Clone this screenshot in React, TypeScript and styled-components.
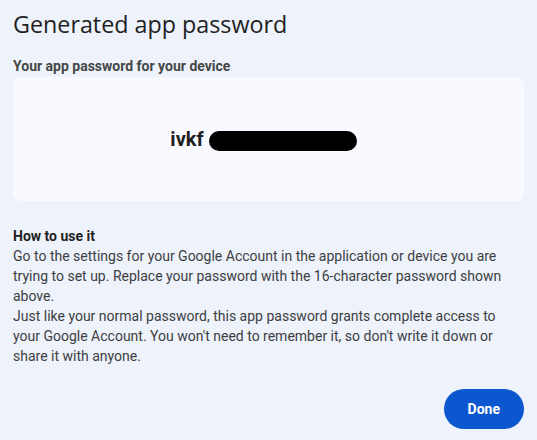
import React from 'react';
import styled, { createGlobalStyle } from 'styled-components';

const GlobalStyle = createGlobalStyle`
  html, body {
    margin: 0;
    padding: 0;
    background: #eef2fa;
  }
  * {
    box-sizing: border-box;
  }
`;

const Dialog = styled.div`
  width: 537px;
  height: 440px;
  padding: 8px 13px 0 13px;
  background: #eef2fa;
  font-family: Roboto, "Noto Sans", sans-serif;
  color: #1f1f1f;
  display: flex;
  flex-direction: column;
`;

const Title = styled.h1`
  margin: 0;
  font-size: 23.3px;
  font-weight: 400;
  line-height: 32px;
  color: #1f1f1f;
  font-family: "Open Sans", Roboto, sans-serif;
`;

const Label = styled.div`
  margin-top: 17px;
  font-size: 14px;
  font-weight: 700;
  line-height: 18px;
  color: #444746;
`;

const PasswordCard = styled.div`
  margin-top: 2px;
  height: 124px;
  border-radius: 8px;
  background: #f8faff;
  display: flex;
  align-items: center;
  justify-content: center;
  gap: 5px;
  padding-right: 10px;
`;

const PasswordText = styled.span`
  font-size: 20px;
  font-weight: 700;
  color: #1f1f1f;
`;

const Redaction = styled.span`
  display: inline-block;
  width: 148px;
  height: 20px;
  border-radius: 10px;
  background: #000;
  margin-top: 3px;
`;

const Section = styled.div`
  margin-top: 25px;
  font-size: 14px;
  line-height: 20px;
  color: #3c4043;
`;

const SectionTitle = styled.div`
  font-weight: 700;
  color: #1f1f1f;
`;

const Paragraph = styled.p`
  margin: 0;
`;

const Footer = styled.div`
  display: flex;
  justify-content: flex-end;
  margin-top: 23px;
`;

const DoneButton = styled.button`
  border: none;
  background: #0b57d0;
  color: #ffffff;
  font-family: Roboto, "Noto Sans", sans-serif;
  font-size: 14px;
  font-weight: 700;
  height: 40px;
  padding: 0 24px;
  border-radius: 20px;
  cursor: pointer;
`;

export default function App() {
  return (
    <>
      <GlobalStyle />
      <Dialog>
        <Title>Generated app password</Title>
        <Label>Your app password for your device</Label>
        <PasswordCard>
          <PasswordText>ivkf</PasswordText>
          <Redaction />
        </PasswordCard>
        <Section>
          <SectionTitle>How to use it</SectionTitle>
          <Paragraph>
            Go to the settings for your Google Account in the application or device you are
            trying to set up. Replace your password with the 16-character password shown
            above.
          </Paragraph>
          <Paragraph>
            Just like your normal password, this app password grants complete access to
            your Google Account. You won't need to remember it, so don't write it down or
            share it with anyone.
          </Paragraph>
        </Section>
        <Footer>
          <DoneButton>Done</DoneButton>
        </Footer>
      </Dialog>
    </>
  );
}
